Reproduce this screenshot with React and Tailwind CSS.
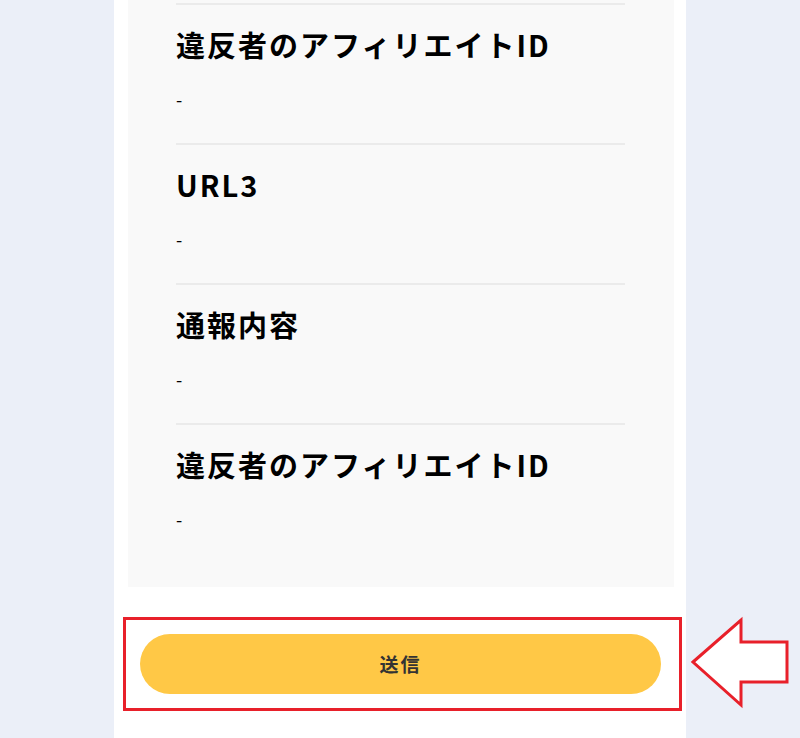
const FONT = { fontFamily: '"Noto Sans CJK JP", "Noto Sans", sans-serif' };

const items = [
  { label: "違反者のアフィリエイトID", value: "-" },
  { label: "URL3", value: "-" },
  { label: "通報内容", value: "-" },
  { label: "違反者のアフィリエイトID", value: "-" },
];

export default function App() {
  return (
    <div className="relative min-h-screen bg-[#ebeff8] flex justify-center overflow-hidden" style={FONT}>
      <div className="w-[572px] bg-white min-h-[738px]">
        {/* confirmation panel (scrolled, top cut off) */}
        <div className="ml-[14px] mr-[12px] bg-[#f9f9f9] pt-[3px] pb-[24px] pl-[48px] pr-[49px]">
          {items.map((it, i) => (
            <Row key={i} label={it.label} value={it.value} />
          ))}
        </div>

        {/* submit */}
        <div className="mt-[30px] ml-[9px] mr-[4px] border-[3px] border-[#e8202a] pt-[14px] pb-[14px] pl-[14px] pr-[18px]">
          <button className="w-full h-[60px] rounded-full bg-[#ffc846] text-[#333] text-[19px] font-bold tracking-[2px]">
            送信
          </button>
        </div>
      </div>

      {/* annotation arrow */}
      <svg className="absolute left-[690px] top-[616px]" width="100" height="94" viewBox="690 616 100 94">
        <polygon
          points="693,662 741,620 741,642 787,642 787,682 741,682 741,705"
          fill="#fff"
          stroke="#e8202a"
          strokeWidth="3"
          strokeLinejoin="miter"
        />
      </svg>
    </div>
  );
}

function Row({ label, value }) {
  return (
    <div className="border-t-2 border-[#ebebeb] pt-[18px] pb-[32px]">
      <div className="text-[29px] leading-[42px] font-bold text-black tracking-[2px]">{label}</div>
      <div className="mt-[22px] text-[18px] leading-[24px] text-black">{value}</div>
    </div>
  );
}
